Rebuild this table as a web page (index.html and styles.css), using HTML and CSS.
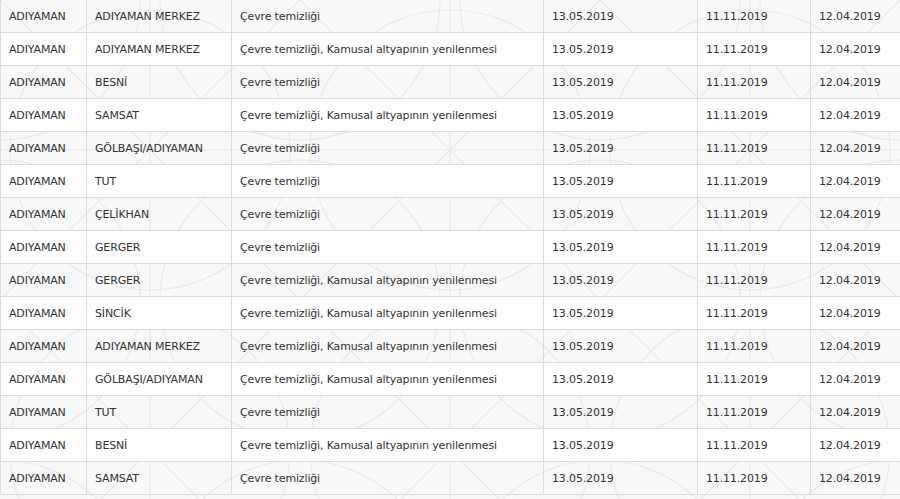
FILE: index.html
```html
<!DOCTYPE html>
<html lang="tr">
  <head>
    <meta charset="UTF-8" />
    <meta name="viewport" content="width=device-width, initial-scale=1.0" />
    <title>Başvurular</title>
    <link rel="stylesheet" href="styles.css">
  </head>
  <body>
    <div class="page">
      <table class="list">
        <tbody>
          <tr><td>ADIYAMAN</td><td>ADIYAMAN MERKEZ</td><td>Çevre temizliği</td><td>13.05.2019</td><td>11.11.2019</td><td>12.04.2019</td></tr>
          <tr><td>ADIYAMAN</td><td>ADIYAMAN MERKEZ</td><td>Çevre temizliği, Kamusal altyapının yenilenmesi</td><td>13.05.2019</td><td>11.11.2019</td><td>12.04.2019</td></tr>
          <tr><td>ADIYAMAN</td><td>BESNİ</td><td>Çevre temizliği</td><td>13.05.2019</td><td>11.11.2019</td><td>12.04.2019</td></tr>
          <tr><td>ADIYAMAN</td><td>SAMSAT</td><td>Çevre temizliği, Kamusal altyapının yenilenmesi</td><td>13.05.2019</td><td>11.11.2019</td><td>12.04.2019</td></tr>
          <tr><td>ADIYAMAN</td><td>GÖLBAŞI/ADIYAMAN</td><td>Çevre temizliği</td><td>13.05.2019</td><td>11.11.2019</td><td>12.04.2019</td></tr>
          <tr><td>ADIYAMAN</td><td>TUT</td><td>Çevre temizliği</td><td>13.05.2019</td><td>11.11.2019</td><td>12.04.2019</td></tr>
          <tr><td>ADIYAMAN</td><td>ÇELİKHAN</td><td>Çevre temizliği</td><td>13.05.2019</td><td>11.11.2019</td><td>12.04.2019</td></tr>
          <tr><td>ADIYAMAN</td><td>GERGER</td><td>Çevre temizliği</td><td>13.05.2019</td><td>11.11.2019</td><td>12.04.2019</td></tr>
          <tr><td>ADIYAMAN</td><td>GERGER</td><td>Çevre temizliği, Kamusal altyapının yenilenmesi</td><td>13.05.2019</td><td>11.11.2019</td><td>12.04.2019</td></tr>
          <tr><td>ADIYAMAN</td><td>SİNCİK</td><td>Çevre temizliği, Kamusal altyapının yenilenmesi</td><td>13.05.2019</td><td>11.11.2019</td><td>12.04.2019</td></tr>
          <tr><td>ADIYAMAN</td><td>ADIYAMAN MERKEZ</td><td>Çevre temizliği, Kamusal altyapının yenilenmesi</td><td>13.05.2019</td><td>11.11.2019</td><td>12.04.2019</td></tr>
          <tr><td>ADIYAMAN</td><td>GÖLBAŞI/ADIYAMAN</td><td>Çevre temizliği, Kamusal altyapının yenilenmesi</td><td>13.05.2019</td><td>11.11.2019</td><td>12.04.2019</td></tr>
          <tr><td>ADIYAMAN</td><td>TUT</td><td>Çevre temizliği</td><td>13.05.2019</td><td>11.11.2019</td><td>12.04.2019</td></tr>
          <tr><td>ADIYAMAN</td><td>BESNİ</td><td>Çevre temizliği, Kamusal altyapının yenilenmesi</td><td>13.05.2019</td><td>11.11.2019</td><td>12.04.2019</td></tr>
          <tr><td>ADIYAMAN</td><td>SAMSAT</td><td>Çevre temizliği</td><td>13.05.2019</td><td>11.11.2019</td><td>12.04.2019</td></tr>
        </tbody>
      </table>
    </div>
  </body>
</html>
```

FILE: styles.css
```css
html, body {
  margin: 0;
  height: 100%;
}

body {
  background-color: #f8f8f8;
  background-image: url("data:image/svg+xml;utf8,<svg xmlns='http://www.w3.org/2000/svg' width='300' height='300' fill='none' stroke='%23e9e9e9' stroke-width='1.2'><circle cx='150' cy='150' r='140'/><circle cx='0' cy='0' r='140'/><circle cx='300' cy='0' r='140'/><circle cx='0' cy='300' r='140'/><circle cx='300' cy='300' r='140'/><path d='M0 150 L300 150 M150 0 L150 300 M0 0 L300 300 M300 0 L0 300'/></svg>");
  font-family: "DejaVu Sans", Verdana, sans-serif;
  font-size: 11px;
  letter-spacing: -0.15px;
  color: #333;
  overflow: hidden;
}

.page {
  margin-top: -1px;
}

.list {
  border-collapse: collapse;
  width: 910px;
  table-layout: fixed;
}

.list td {
  height: 33px;
  padding: 0 8px;
  border: 1px solid #dcdcdc;
  white-space: nowrap;
  vertical-align: middle;
  box-sizing: border-box;
}

.list td:nth-child(1) { width: 86px; }
.list td:nth-child(2) { width: 145px; }
.list td:nth-child(3) { width: 312px; }
.list td:nth-child(4) { width: 154px; }
.list td:nth-child(5) { width: 113px; }
.list td:nth-child(6) { width: 100px; }

.list tr:nth-child(even) td {
  background: #fff;
}
```
